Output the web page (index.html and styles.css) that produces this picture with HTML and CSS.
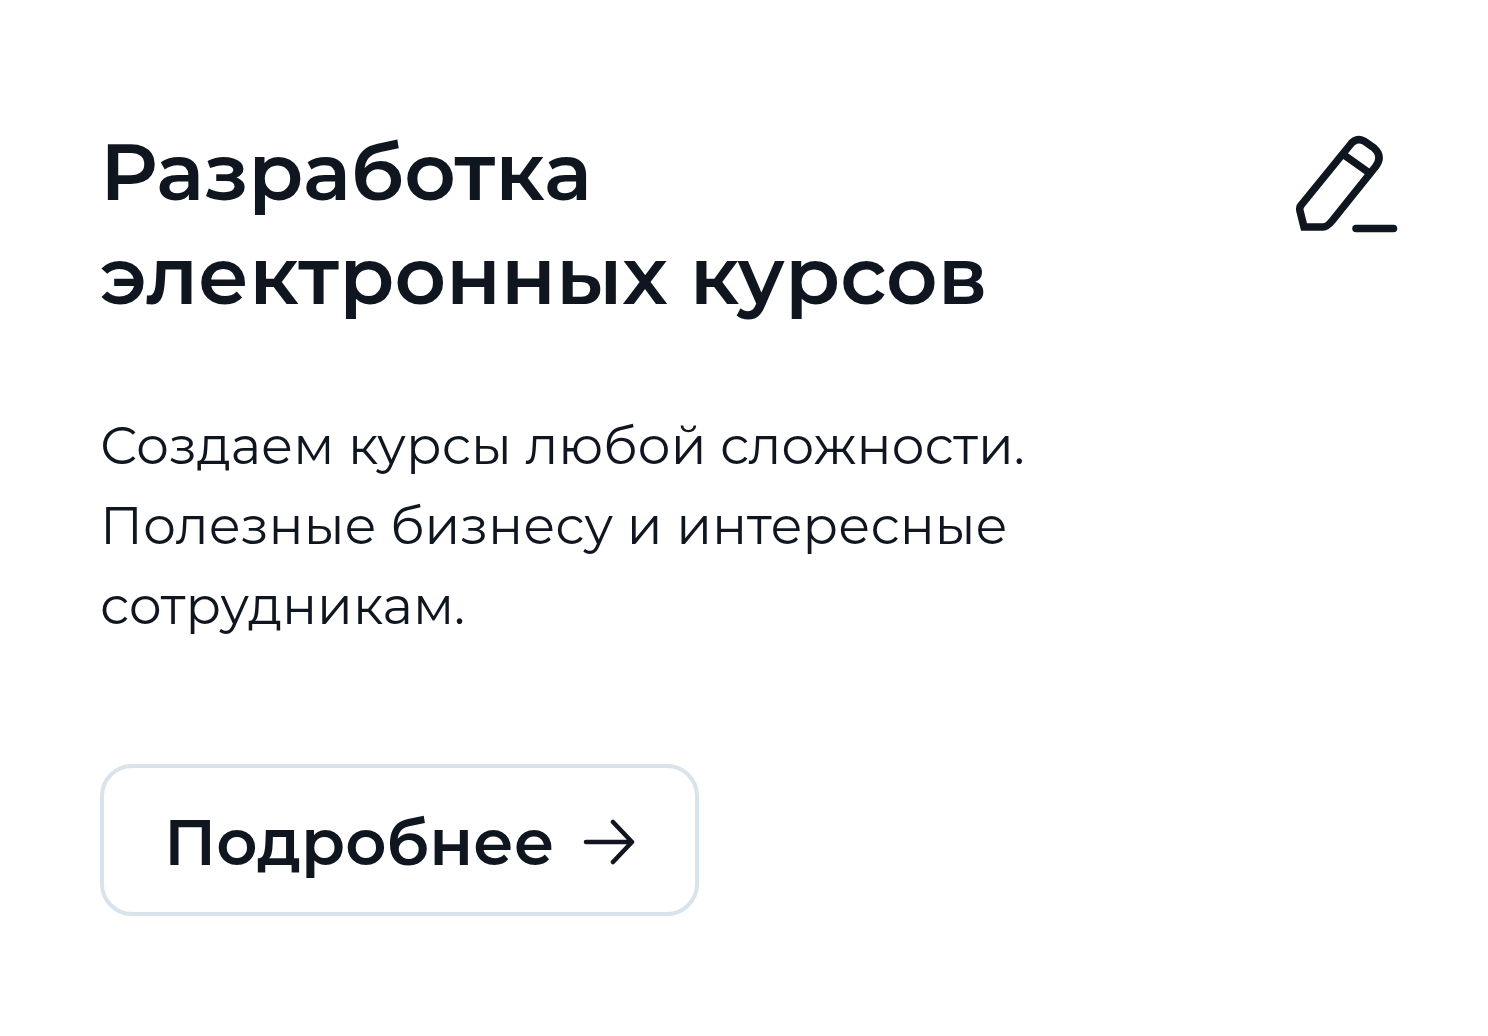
FILE: index.html
```html
<!DOCTYPE html>
<html lang="ru">
<head>
    <meta charset="UTF-8">
    <meta name="viewport" content="width=device-width, initial-scale=1.0">
    <title>Разработка электронных курсов</title>
    <link rel="stylesheet" href="styles.css">
</head>
<body>
    <article class="card">
        <div class="card-header">
            <h2 class="card-title">Разработка<br>электронных курсов</h2>
            <svg class="card-icon" viewBox="0 0 104 100" fill="none" stroke="currentColor" stroke-width="7.5" stroke-linecap="round" aria-hidden="true">
                <path d="M8 93L4 77Q3 73 6 70L54 11Q60 3 68 7L78 14Q87 22 80 32L36 87Q31 93 27 93Z"/>
                <path d="M48 21L72 38"/>
                <path d="M60 94.500H97.500"/>
            </svg>
        </div>
        <p class="card-text">Создаем курсы любой сложности. Полезные бизнесу и интересные сотрудникам.</p>
        <a class="card-link" href="#">
            <span>Подробнее</span>
            <svg class="arrow" viewBox="0 0 52 46" fill="none" stroke="currentColor" stroke-width="4.500" stroke-linecap="round" stroke-linejoin="round" aria-hidden="true">
                <path d="M3 23H49M30 3L49 23L30 43"/>
            </svg>
        </a>
    </article>
</body>
</html>
```

FILE: styles.css
```css
* {
    box-sizing: border-box;
}
body {
    margin: 0;
    background: #fff;
    color: #0f161f;
    font-family: Montserrat, Inter, "Open Sans", sans-serif;
}
.card {
    padding: 120px 88px 120px 100px;
}
.card-header {
    display: flex;
    justify-content: space-between;
    align-items: flex-start;
}
.card-title {
    margin: 0;
    font-size: 80px;
    font-weight: 600;
    line-height: 104px;
}
.card-icon {
    width: 104px;
    height: 100px;
    margin-top: 14px;
    flex-shrink: 0;
}
.card-text {
    max-width: 960px;
    margin: 78px 0 0;
    font-size: 52px;
    line-height: 80px;
}
.card-link {
    display: inline-flex;
    align-items: center;
    gap: 28px;
    height: 152px;
    margin-top: 118px;
    padding: 4px 60px 0;
    border: 4px solid #d9e3ec;
    border-radius: 32px;
    color: inherit;
    font-size: 64px;
    font-weight: 600;
    text-decoration: none;
}
.arrow {
    width: 52px;
    height: 46px;
}
```
